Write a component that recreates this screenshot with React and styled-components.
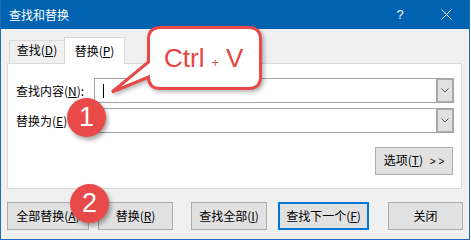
import styled, { createGlobalStyle, css } from 'styled-components';

const GlobalStyle = createGlobalStyle`
  body {
    margin: 0;
    background: #ffffff;
    font-family: "Noto Sans CJK SC", "Microsoft YaHei", sans-serif;
  }
`;

const RED = '#e84a4a';

function Chevron() {
  return (
    <svg width="8" height="5" viewBox="0 0 8 5">
      <path d="M0.5 0.5 L4 4 L7.5 0.5" fill="none" stroke="#5a5a5a" strokeWidth="1" />
    </svg>
  );
}

function ComboBox({ caret }) {
  return (
    <Combo>
      <ComboText>{caret && <Caret />}</ComboText>
      <DropButton>
        <Chevron />
      </DropButton>
    </Combo>
  );
}

function App() {
  return (
    <>
      <GlobalStyle />
      <Dialog>
        <TitleBar>
          <Title>查找和替换</Title>
          <TitleButton>?</TitleButton>
          <TitleButton>
            <svg width="11" height="11" viewBox="0 0 11 11">
              <path d="M0.5 0.5 L10.5 10.5 M10.5 0.5 L0.5 10.5" stroke="#fff" strokeWidth="1" />
            </svg>
          </TitleButton>
        </TitleBar>

        <Body>
          <Tabs>
            <Tab $w={55}>查找(<u>D</u>)</Tab>
            <Tab $w={61} $active>替换(<u>P</u>)</Tab>
          </Tabs>

          <Panel>
            <FieldRow>
              <Label>查找内容(<u>N</u>):</Label>
              <ComboBox caret />
            </FieldRow>
            <FieldRow $gap={5}>
              <Label>替换为(<u>E</u>)</Label>
              <ComboBox />
            </FieldRow>
            <OptionsRow>
              <PushButton $w={78}>
                选项(<u>T</u>) <Arrows>&gt; &gt;</Arrows>
              </PushButton>
            </OptionsRow>
          </Panel>

          <ButtonRow>
            <PushButton $w={82}>全部替换(<u>A</u>)</PushButton>
            <PushButton $w={75} $ml={9}>替换(<u>R</u>)</PushButton>
            <PushButton $w={76} $ml={18}>查找全部(<u>I</u>)</PushButton>
            <PushButton $w={91} $ml={11} $focused>查找下一个(<u>F</u>)</PushButton>
            <PushButton $w={75} $ml={19}>关闭</PushButton>
          </ButtonRow>
        </Body>

        {/* annotations drawn over the dialog */}
        <Bubble>
          <svg width="170" height="80" viewBox="0 0 170 80">
            <path
              d="M60.5 7.5 H148.5 Q160.5 7.5 160.5 19.5 V56.5 Q160.5 68.5 148.5 68.5 H60.5 Q48.5 68.5 48.5 57 L12 72 L48.5 42 V19.5 Q48.5 7.5 60.5 7.5 Z"
              fill="#ffffff"
              stroke={RED}
              strokeWidth="3"
            />
          </svg>
          <BubbleText>
            Ctrl <small>+</small> V
          </BubbleText>
        </Bubble>

        <Badge $x={67} $y={98}>1</Badge>
        <Badge $x={70} $y={184}>2</Badge>
      </Dialog>
    </>
  );
}

const Dialog = styled.div`
  position: relative;
  box-sizing: border-box;
  width: 470px;
  height: 240px;
  border: 1px solid #1f6cbc;
  border-top: none;
  background: #f0f0f0;
  display: flex;
  flex-direction: column;
  font-size: 12px;
  color: #000;
`;

const TitleBar = styled.div`
  height: 29px;
  background: #0063b1;
  color: #fff;
  display: flex;
  align-items: center;
  flex-shrink: 0;
`;

const Title = styled.span`
  margin-left: 8px;
  margin-right: auto;
  line-height: 16px;
`;

const TitleButton = styled.div`
  width: 46px;
  height: 29px;
  display: flex;
  align-items: center;
  justify-content: center;
  font-family: "Liberation Sans", Arial, sans-serif;
  font-size: 13px;
`;

const Body = styled.div`
  padding: 8px 0 0 6px;
  display: flex;
  flex-direction: column;
`;

const Tabs = styled.div`
  display: flex;
  align-items: flex-end;
  height: 27px;
  margin-left: 2px;
`;

const Tab = styled.div`
  box-sizing: border-box;
  width: ${p => p.$w}px;
  height: 24px;
  display: flex;
  align-items: flex-end;
  justify-content: center;
  padding-bottom: 5px;
  line-height: 16px;
  background: #f0f0f0;
  border: 1px solid #d9d9d9;
  border-right: none;

  ${p => p.$active && css`
    position: relative;
    z-index: 1;
    height: 27px;
    background: #fff;
    border-right: 1px solid #d9d9d9;
    border-bottom: none;
  `}
`;

const Panel = styled.div`
  box-sizing: border-box;
  width: 455px;
  height: 126px;
  margin-top: -1px;
  padding: 14px 7px 0 8px;
  background: #fff;
  border: 1px solid #d9d9d9;
  display: flex;
  flex-direction: column;
`;

const FieldRow = styled.div`
  display: flex;
  align-items: center;
  height: 25px;
  margin-top: ${p => p.$gap || 0}px;
`;

const Label = styled.div`
  width: 78px;
  line-height: 16px;
  white-space: nowrap;
`;

const Combo = styled.div`
  flex: 1;
  box-sizing: border-box;
  height: 25px;
  display: flex;
  border: 1px solid #a4a4a4;
  background: #fff;
`;

const ComboText = styled.div`
  flex: 1;
  display: flex;
  align-items: center;
  padding-left: 8px;
`;

const Caret = styled.span`
  width: 1px;
  height: 14px;
  background: #000;
`;

const DropButton = styled.div`
  width: 16px;
  display: flex;
  align-items: center;
  justify-content: center;
  background: #e1e1e1;
  border-left: 1px solid #a4a4a4;
  box-shadow: inset 0 0 0 1px #acacac;
`;

const OptionsRow = styled.div`
  display: flex;
  justify-content: flex-end;
  margin-top: 14px;
  padding-right: 1px;
`;

const PushButton = styled.button`
  box-sizing: border-box;
  width: ${p => p.$w}px;
  height: 28px;
  margin: 0 0 0 ${p => p.$ml || 0}px;
  padding: 0;
  font: inherit;
  font-size: 12px;
  line-height: 16px;
  color: #000;
  background: #e1e1e1;
  border: 1px solid #adadad;
  white-space: nowrap;

  ${p => p.$focused && css`
    border: 2px solid #0078d7;
  `}
`;

const Arrows = styled.span`
  font-family: "Liberation Sans", Arial, sans-serif;
  font-size: 10px;
  margin-left: 4px;
`;

const ButtonRow = styled.div`
  display: flex;
  margin-top: 13px;
`;

const Bubble = styled.div`
  position: absolute;
  left: 99px;
  top: 20px;
  width: 170px;
  height: 80px;

  svg {
    position: absolute;
    inset: 0;
    filter: drop-shadow(2px 2px 2px rgba(0, 0, 0, 0.3));
  }
`;

const BubbleText = styled.div`
  position: absolute;
  left: 64px;
  top: 25px;
  font-family: "Liberation Sans", Arial, sans-serif;
  font-size: 26px;
  line-height: 26px;
  color: #e54444;
  white-space: nowrap;

  small {
    font-size: 12px;
  }
`;

const Badge = styled.div`
  position: absolute;
  left: ${p => p.$x - 1}px;
  top: ${p => p.$y}px;
  width: 39px;
  height: 39px;
  border-radius: 50%;
  background: ${RED};
  box-shadow: 2px 3px 4px rgba(0, 0, 0, 0.35);
  color: #fff;
  display: flex;
  align-items: center;
  justify-content: center;
  font-family: "Liberation Sans", Arial, sans-serif;
  font-size: 27px;
  line-height: 1;
`;

export default App;
